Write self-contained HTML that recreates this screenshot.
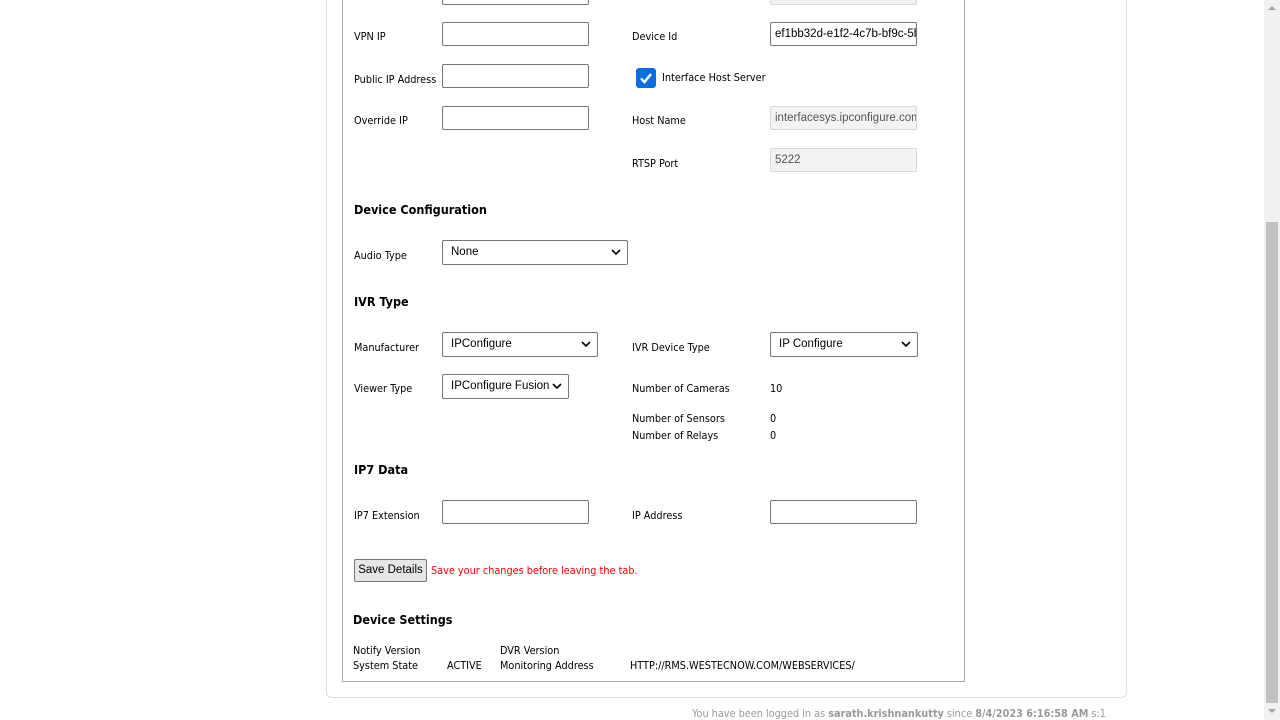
<!DOCTYPE html>
<html><head><style>
body{margin:0;width:1280px;height:720px;background:#fff;font-family:"DejaVu Sans Condensed","Liberation Sans",sans-serif;font-size:10.8px;color:#000;position:relative;overflow:hidden}
.a{position:absolute;white-space:nowrap}
.in{position:absolute;height:24px;border:1px solid #767676;border-radius:2px;box-sizing:border-box;background:#fff;font-family:"Liberation Sans",sans-serif;font-size:11.5px;padding:5px 4px;overflow:hidden;white-space:nowrap}
.dis{background:#f3f3f3;border-color:#d8d8d8;color:#555}
.sel{position:absolute;height:25px;border:1px solid #767676;border-radius:2px;box-sizing:border-box;background:#fff;font-family:"Liberation Sans",sans-serif;font-size:11.5px;padding:5px 8px;white-space:nowrap}
.sel svg{position:absolute;right:6px;top:8px}
h3{position:absolute;margin:0;font-size:12.5px;font-weight:bold;font-family:"DejaVu Sans Condensed","Liberation Sans",sans-serif}
</style></head><body>
<div class="a" style="left:326px;top:-10px;width:799px;height:706px;border:1px solid #ddd;border-radius:6px"></div>
<div class="a" style="left:342px;top:-10px;width:621px;height:691px;border:1px solid #aaa;border-top:none"></div>

<div class="in" style="left:442px;top:-19px;width:147px"></div>
<div class="in dis" style="left:770px;top:-19px;width:147px"></div>

<div class="a" style="left:354px;top:30px">VPN IP</div>
<div class="in" style="left:442px;top:22px;width:147px"></div>
<div class="a" style="left:632px;top:30px">Device Id</div>
<div class="in" style="left:770px;top:22px;width:147px">ef1bb32d-e1f2-4c7b-bf9c-5b</div>

<div class="a" style="left:354px;top:73px">Public IP Address</div>
<div class="in" style="left:442px;top:64px;width:147px"></div>
<div class="a" style="left:636px;top:68px;width:20px;height:20px;background:#0a6ee0;border-radius:3px"><svg width="20" height="20"><path d="M5 10.5l3.5 3.5 6.5-8" stroke="#fff" stroke-width="2.5" fill="none"/></svg></div>
<div class="a" style="left:662px;top:71px">Interface Host Server</div>

<div class="a" style="left:354px;top:114px">Override IP</div>
<div class="in" style="left:442px;top:106px;width:147px"></div>
<div class="a" style="left:632px;top:114px">Host Name</div>
<div class="in dis" style="left:770px;top:106px;width:147px">interfacesys.ipconfigure.com</div>

<div class="a" style="left:632px;top:157px">RTSP Port</div>
<div class="in dis" style="left:770px;top:148px;width:147px">5222</div>

<h3 style="left:354px;top:202px">Device Configuration</h3>
<div class="a" style="left:354px;top:249px">Audio Type</div>
<div class="sel" style="left:442px;top:240px;width:186px">None<svg width="10" height="7"><path d="M1 1l4 4 4-4" stroke="#000" stroke-width="1.6" fill="none"/></svg></div>

<h3 style="left:354px;top:294px">IVR Type</h3>
<div class="a" style="left:354px;top:341px">Manufacturer</div>
<div class="sel" style="left:442px;top:332px;width:156px">IPConfigure<svg width="10" height="7"><path d="M1 1l4 4 4-4" stroke="#000" stroke-width="1.6" fill="none"/></svg></div>
<div class="a" style="left:632px;top:341px">IVR Device Type</div>
<div class="sel" style="left:770px;top:332px;width:148px">IP Configure<svg width="10" height="7"><path d="M1 1l4 4 4-4" stroke="#000" stroke-width="1.6" fill="none"/></svg></div>

<div class="a" style="left:354px;top:382px">Viewer Type</div>
<div class="sel" style="left:442px;top:374px;width:127px">IPConfigure Fusion<svg width="10" height="7"><path d="M1 1l4 4 4-4" stroke="#000" stroke-width="1.6" fill="none"/></svg></div>
<div class="a" style="left:632px;top:382px">Number of Cameras</div>
<div class="a" style="left:770px;top:382px">10</div>
<div class="a" style="left:632px;top:412px">Number of Sensors</div>
<div class="a" style="left:770px;top:412px">0</div>
<div class="a" style="left:632px;top:429px">Number of Relays</div>
<div class="a" style="left:770px;top:429px">0</div>

<h3 style="left:354px;top:462px">IP7 Data</h3>
<div class="a" style="left:354px;top:509px">IP7 Extension</div>
<div class="in" style="left:442px;top:500px;width:147px"></div>
<div class="a" style="left:632px;top:509px">IP Address</div>
<div class="in" style="left:770px;top:500px;width:147px"></div>

<div class="a" style="left:354px;top:559px;width:73px;height:23px;box-sizing:border-box;border:1px solid #767676;background:#e6e6e6;border-radius:2px;text-align:center;line-height:20px;font-size:11.5px;font-family:'Liberation Sans',sans-serif">Save Details</div>
<div class="a" style="left:431px;top:564px;color:#f00">Save your changes before leaving the tab.</div>

<h3 style="left:353px;top:612px">Device Settings</h3>
<div class="a" style="left:353px;top:644px">Notify Version</div>
<div class="a" style="left:500px;top:644px">DVR Version</div>
<div class="a" style="left:353px;top:659px">System State</div>
<div class="a" style="left:447px;top:659px">ACTIVE</div>
<div class="a" style="left:500px;top:659px">Monitoring Address</div>
<div class="a" style="left:630px;top:659px">HTTP://RMS.WESTECNOW.COM/WEBSERVICES/</div>

<div class="a" style="left:692px;top:707px;color:#999">You have been logged in as <b>sarath.krishnankutty</b> since <b>8/4/2023 6:16:58 AM</b> s:1</div>

<div class="a" style="left:1264px;top:0;width:16px;height:720px;background:#f1f1f1"></div>
<div class="a" style="left:1266px;top:222px;width:12px;height:481px;background:#c1c1c1"></div>
<div class="a" style="left:1268px;top:6px;width:0;height:0;border:4px solid transparent;border-bottom-color:#a3a3a3;border-top:none"></div>
<div class="a" style="left:1268px;top:709px;width:0;height:0;border:4px solid transparent;border-top-color:#a3a3a3;border-bottom:none"></div>
</body></html>
